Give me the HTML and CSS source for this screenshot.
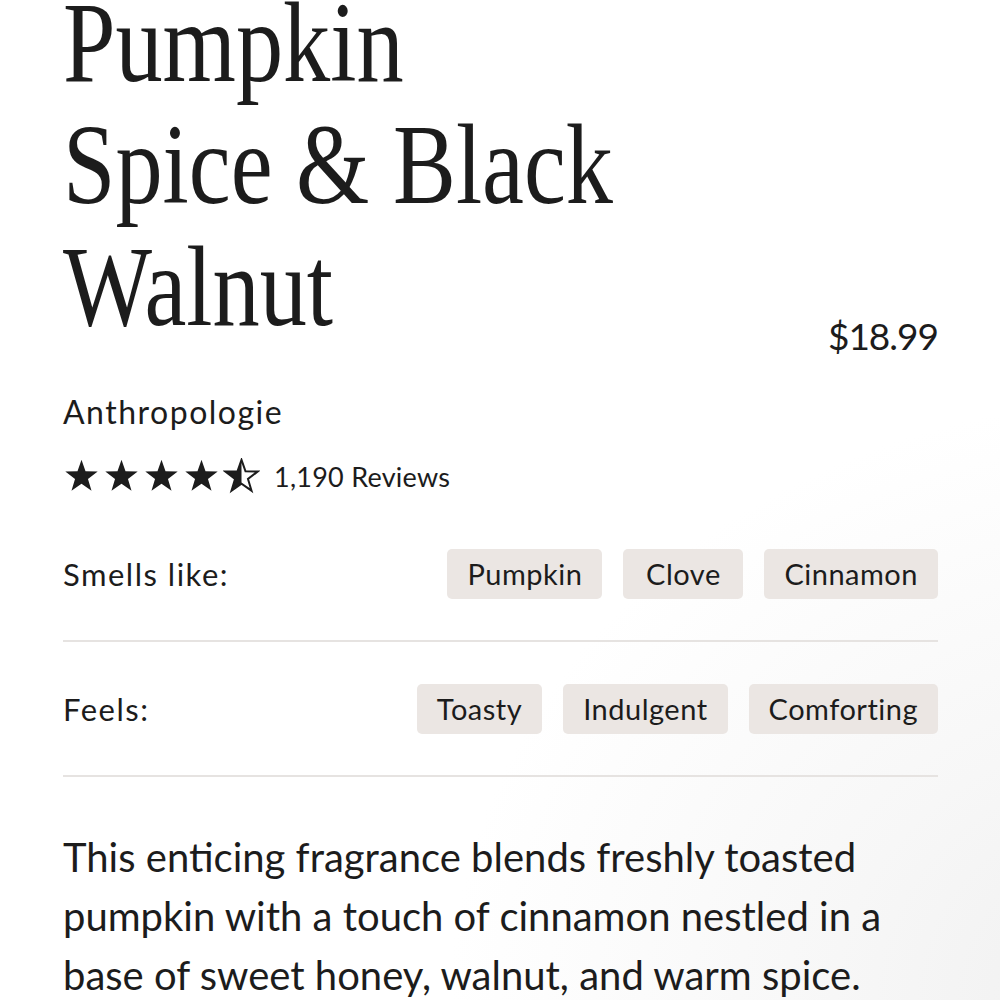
FILE: index.html
```html
<!DOCTYPE html>
<html lang="en">
<head>
<meta charset="utf-8">
<title>Pumpkin Spice &amp; Black Walnut</title>
<link rel="stylesheet" href="styles.css">
</head>
<body>
<main class="product">
  <header class="head">
    <h1 class="title"><span class="title-inner">Pumpkin<br>Spice &amp; Black<br>Walnut</span></h1>
    <div class="price">$18.99</div>
  </header>
  <div class="brand">Anthropologie</div>
  <div class="rating">
    <div class="stars">
      <svg class="star" viewBox="0 0 24 24"><polygon points="12,1.2 14.6,8.6 22.5,8.8 16.2,13.6 18.5,21.2 12,16.7 5.5,21.2 7.8,13.6 1.5,8.8 9.4,8.6"/></svg>
      <svg class="star" viewBox="0 0 24 24"><polygon points="12,1.2 14.6,8.6 22.5,8.8 16.2,13.6 18.5,21.2 12,16.7 5.5,21.2 7.8,13.6 1.5,8.8 9.4,8.6"/></svg>
      <svg class="star" viewBox="0 0 24 24"><polygon points="12,1.2 14.6,8.6 22.5,8.8 16.2,13.6 18.5,21.2 12,16.7 5.5,21.2 7.8,13.6 1.5,8.8 9.4,8.6"/></svg>
      <svg class="star" viewBox="0 0 24 24"><polygon points="12,1.2 14.6,8.6 22.5,8.8 16.2,13.6 18.5,21.2 12,16.7 5.5,21.2 7.8,13.6 1.5,8.8 9.4,8.6"/></svg>
      <svg class="star" viewBox="0 0 24 24">
        <polygon class="star-outline" points="12,1.2 14.6,8.6 22.5,8.8 16.2,13.6 18.5,21.2 12,16.7 5.5,21.2 7.8,13.6 1.5,8.8 9.4,8.6"/>
        <polygon points="12,1.2 12,16.7 5.5,21.2 7.8,13.6 1.5,8.8 9.4,8.6"/>
      </svg>
    </div>
    <span class="reviews">1,190 Reviews</span>
  </div>
  <div class="attr attr-first">
    <span class="attr-label">Smells like:</span>
    <ul class="tags">
      <li class="tag">Pumpkin</li>
      <li class="tag">Clove</li>
      <li class="tag">Cinnamon</li>
    </ul>
  </div>
  <div class="attr">
    <span class="attr-label">Feels:</span>
    <ul class="tags">
      <li class="tag">Toasty</li>
      <li class="tag">Indulgent</li>
      <li class="tag">Comforting</li>
    </ul>
  </div>
  <p class="desc">This enticing fragrance blends freshly toasted pumpkin with a touch of cinnamon nestled in a base of sweet honey, walnut, and warm spice.</p>
</main>
</body>
</html>
```
FILE: styles.css
```css
html, body {
  margin: 0;
  padding: 0;
}
body {
  background: radial-gradient(ellipse 700px 600px at 1150px 1000px, #efefef 0%, #f7f7f7 45%, #ffffff 100%);
  color: #1c1c1c;
  font-family: "Lato", "Liberation Sans", sans-serif;
  min-height: 1000px;
  overflow: hidden;
}
.product {
  padding: 0 62px 0 63px;
}
.head {
  display: flex;
  justify-content: space-between;
  align-items: flex-end;
}
.title {
  margin: -18px 0 0 0;
  font-family: "Liberation Serif", serif;
  font-weight: 400;
  font-size: 115px;
  line-height: 122px;
  white-space: nowrap;
  width: 540px;
}
.title-inner {
  display: inline-block;
  transform: scaleX(0.82);
  transform-origin: left top;
}
.price {
  font-size: 37px;
  line-height: 44px;
  letter-spacing: -1px;
  margin-bottom: -10px;
}
.brand {
  margin-top: 46px;
  font-size: 32px;
  line-height: 36px;
  letter-spacing: 1.5px;
}
.rating {
  display: flex;
  align-items: center;
  gap: 14px;
  margin-top: 28px;
}
.stars {
  display: flex;
  gap: 3px;
}
.star {
  width: 37px;
  height: 37px;
  fill: #1c1c1c;
}
.star-outline {
  fill: none;
  stroke: #1c1c1c;
  stroke-width: 1.3;
  stroke-linejoin: miter;
}
.reviews {
  font-size: 27px;
  line-height: 32px;
  letter-spacing: 0.25px;
}
.attr {
  display: flex;
  justify-content: space-between;
  align-items: center;
  padding: 42px 0 41px;
  border-bottom: 2px solid #e6e3e1;
}
.attr-first {
  margin-top: 54px;
  padding-top: 0;
}
.attr-label {
  font-size: 31px;
  letter-spacing: 1.5px;
}
.tags {
  display: flex;
  gap: 21px;
  list-style: none;
  margin: 0;
  padding: 0;
}
.tag {
  background: #ebe6e3;
  border-radius: 5px;
  padding: 0 20px;
  height: 50px;
  line-height: 50px;
  font-size: 29px;
  letter-spacing: 0.5px;
  min-width: 80px;
  text-align: center;
}
.desc {
  margin: 51px 0 0 0;
  font-size: 40px;
  line-height: 59px;
}
```
